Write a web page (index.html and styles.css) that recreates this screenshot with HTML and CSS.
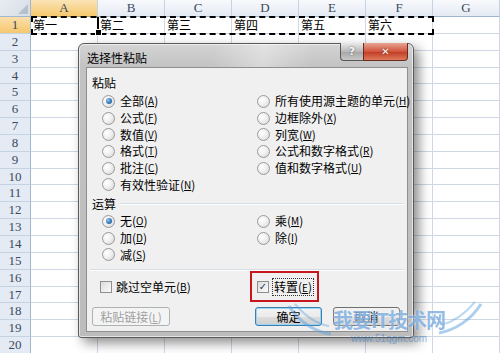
FILE: index.html
```html
<!DOCTYPE html>
<html lang="zh-CN">
<head>
    <meta charset="UTF-8">
    <title>选择性粘贴</title>
    <link rel="stylesheet" href="styles.css">
</head>
<body>
    <div class="screen">
        <div class="sheet">
            <div class="corner"></div>
            <div class="col-head sel">A</div>
            <div class="col-head">B</div>
            <div class="col-head">C</div>
            <div class="col-head">D</div>
            <div class="col-head">E</div>
            <div class="col-head">F</div>
            <div class="col-head">G</div>

            <div class="row-head sel">1</div>
            <div class="cell">第一</div><div class="cell">第二</div><div class="cell">第三</div><div class="cell">第四</div><div class="cell">第五</div><div class="cell">第六</div><div class="cell"></div>

            <div class="row-head">2</div><div class="blank"></div>
            <div class="row-head">3</div><div class="blank"></div>
            <div class="row-head">4</div><div class="blank"></div>
            <div class="row-head">5</div><div class="blank"></div>
            <div class="row-head">6</div><div class="blank"></div>
            <div class="row-head">7</div><div class="blank"></div>
            <div class="row-head">8</div><div class="blank"></div>
            <div class="row-head">9</div><div class="blank"></div>
            <div class="row-head">10</div><div class="blank"></div>
            <div class="row-head">11</div><div class="blank"></div>
            <div class="row-head">12</div><div class="blank"></div>
            <div class="row-head">13</div><div class="blank"></div>
            <div class="row-head">14</div><div class="blank"></div>
            <div class="row-head">15</div><div class="blank"></div>
            <div class="row-head">16</div><div class="blank"></div>
            <div class="row-head">17</div><div class="blank"></div>
            <div class="row-head">18</div><div class="blank"></div>
            <div class="row-head">19</div><div class="blank"></div>
            <div class="row-head">20</div><div class="blank"></div>
        </div>

        <!-- 复制区域的虚线框 -->
        <div class="marquee"></div>
        <div class="active-edge"></div>

        <div class="dialog">
            <div class="titlebar">
                <span class="title">选择性粘贴</span>
                <div class="caption-btns">
                    <span class="help-btn">?</span>
                    <span class="close-btn">&#x2715;</span>
                </div>
            </div>
            <div class="client">
                <div class="group-label">粘贴</div>
                <div class="options paste">
                    <label class="opt"><span class="radio on"></span>全部(<u>A</u>)</label>
                    <label class="opt"><span class="radio"></span>所有使用源主题的单元(<u>H</u>)</label>
                    <label class="opt"><span class="radio"></span>公式(<u>F</u>)</label>
                    <label class="opt"><span class="radio"></span>边框除外(<u>X</u>)</label>
                    <label class="opt"><span class="radio"></span>数值(<u>V</u>)</label>
                    <label class="opt"><span class="radio"></span>列宽(<u>W</u>)</label>
                    <label class="opt"><span class="radio"></span>格式(<u>T</u>)</label>
                    <label class="opt"><span class="radio"></span>公式和数字格式(<u>R</u>)</label>
                    <label class="opt"><span class="radio"></span>批注(<u>C</u>)</label>
                    <label class="opt"><span class="radio"></span>值和数字格式(<u>U</u>)</label>
                    <label class="opt"><span class="radio"></span>有效性验证(<u>N</u>)</label>
                </div>

                <div class="group-label line">运算</div>
                <div class="options ops">
                    <label class="opt"><span class="radio on"></span>无(<u>O</u>)</label>
                    <label class="opt"><span class="radio"></span>乘(<u>M</u>)</label>
                    <label class="opt"><span class="radio"></span>加(<u>D</u>)</label>
                    <label class="opt"><span class="radio"></span>除(<u>I</u>)</label>
                    <label class="opt"><span class="radio"></span>减(<u>S</u>)</label>
                </div>

                <div class="separator"></div>

                <div class="checks">
                    <label class="chk"><span class="box"></span>跳过空单元(<u>B</u>)</label>
                    <label class="chk marked"><span class="box on">&#x2713;</span><span class="focus">转置(<u>E</u>)</span></label>
                </div>

                <div class="buttons">
                    <button class="btn disabled">粘贴链接(<u>L</u>)</button>
                    <button class="btn default">确定</button>
                    <button class="btn">取消</button>
                </div>
            </div>
        </div>

        <div class="watermark">
            <svg class="wings" width="200" height="44" viewBox="0 0 200 44">
                <path d="M4 6 C 14 22, 30 32, 46 34" fill="none" stroke="#5aa0dc" stroke-width="3" opacity="0.5"/>
                <path d="M10 4 C 20 16, 32 24, 44 26" fill="none" stroke="#5aa0dc" stroke-width="2" opacity="0.4"/>
                <path d="M196 4 C 186 20, 170 30, 154 33" fill="none" stroke="#5aa0dc" stroke-width="3" opacity="0.5"/>
                <path d="M190 2 C 180 14, 168 22, 156 25" fill="none" stroke="#5aa0dc" stroke-width="2" opacity="0.4"/>
            </svg>
            <div class="wm-text">我要IT技术网</div>
            <div class="wm-url">www.51qgm.com</div>
        </div>
    </div>
</body>
</html>
```

FILE: styles.css
```css
body {
    margin: 0;
    background: #fff;
    font-family: "Noto Sans CJK SC", sans-serif;
}
.screen {
    position: relative;
    width: 500px;
    height: 353px;
    overflow: hidden;
    background: #fff;
}

/* 表格 */
.sheet {
    display: grid;
    grid-template-columns: 31px repeat(6, 67px) 67px;
    grid-template-rows: 17px repeat(20, 16.85px);
    height: 353px;
    background-color: #fff;
}
.corner {
    background: linear-gradient(135deg, #e9edf2 0%, #d6dde6 100%);
    border-right: 1px solid #9eb6ce;
    border-bottom: 1px solid #9eb6ce;
    position: relative;
}
.corner::after {
    content: "";
    position: absolute;
    right: 2px;
    bottom: 2px;
    border-left: 10px solid transparent;
    border-bottom: 10px solid #b4c0ce;
}
.col-head {
    background: linear-gradient(#f8f9fc, #e4eaf3);
    border-right: 1px solid #c5d2e2;
    border-bottom: 1px solid #9eb6ce;
    font-family: "Liberation Serif", serif;
    font-size: 13px;
    color: #3a4a5c;
    text-align: center;
    line-height: 16px;
}
.col-head.sel {
    background: linear-gradient(#fbe4b6, #f5c86e);
    border-bottom-color: #c29a4c;
}
.row-head {
    background: #e4ebf5;
    border-right: 1px solid #9eb6ce;
    border-bottom: 1px solid #c5d2e2;
    font-family: "Liberation Serif", serif;
    font-size: 13px;
    color: #3a4a5c;
    text-align: center;
    line-height: 16px;
}
.row-head.sel {
    background: linear-gradient(#fbe0ac, #f5c86e);
}
.cell {
    font-size: 12px;
    line-height: 16px;
    padding-left: 2px;
    color: #000;
    border-right: 1px solid #d0d7e5;
    border-bottom: 1px solid #d0d7e5;
}
.blank {
    grid-column: 2 / -1;
    border-bottom: 1px solid #d0d7e5;
    background: repeating-linear-gradient(to right, transparent 0, transparent 66px, #d0d7e5 66px, #d0d7e5 67px);
}

.marquee {
    position: absolute;
    left: 31px;
    top: 16px;
    width: 399px;
    height: 15px;
    border: 2px dashed #000;
}
.active-edge {
    position: absolute;
    left: 97px;
    top: 17px;
    width: 2px;
    height: 17px;
    background: #000;
}
.active-edge::after {
    content: "";
    position: absolute;
    left: -2px;
    bottom: -2px;
    width: 5px;
    height: 5px;
    background: #000;
    border: 1px solid #fff;
}

/* 对话框 */
.dialog {
    position: absolute;
    left: 78px;
    top: 43px;
    width: 334px;
    height: 293px;
    border: 1px solid #5a5a5a;
    border-radius: 6px 6px 3px 3px;
    background: linear-gradient(to bottom, #d4d4d4 0, #c2c2c2 24px, #bcbcbc 100%);
    box-shadow: 5px 5px 12px rgba(0, 0, 0, 0.45), inset 0 0 0 1px rgba(255, 255, 255, 0.6);
    display: flex;
    flex-direction: column;
}
.titlebar {
    height: 23px;
    display: flex;
    justify-content: space-between;
    align-items: flex-start;
    background: linear-gradient(100deg, rgba(255,255,255,0) 40%, rgba(255,255,255,0.35) 55%, rgba(255,255,255,0) 70%);
}
.title {
    font-size: 12px;
    color: #000;
    margin: 6px 0 0 8px;
    line-height: 16px;
}
.caption-btns {
    display: flex;
    margin-right: 5px;
    margin-top: -1px;
}
.help-btn, .close-btn {
    height: 17px;
    display: flex;
    align-items: center;
    justify-content: center;
    border: 1px solid #575757;
    border-top: none;
    font-family: "DejaVu Sans", sans-serif;
    font-weight: bold;
    color: #fff;
}
.help-btn {
    width: 22px;
    border-radius: 0 0 0 4px;
    background: linear-gradient(#eaeaea, #b8b8b8 50%, #a5a5a5 51%, #c8c8c8);
    font-size: 11px;
    color: #f6f6f6;
    text-shadow: 0 0 2px #555;
    border-right: none;
}
.close-btn {
    width: 43px;
    border-radius: 0 0 4px 0;
    border-color: #6a2a20;
    background: linear-gradient(#e9a493, #d0563e 50%, #c03a22 51%, #dd7a5a);
    font-size: 10px;
    text-shadow: 0 0 2px #6a1a10;
}
.client {
    flex: 1;
    margin: 0 5px 5px 7px;
    background: #f0f0f0;
    border: 1px solid #8f8f8f;
    position: relative;
    font-size: 12px;
    color: #000;
}
.group-label {
    height: 16px;
    line-height: 16px;
    margin: 7px 0 0 5px;
    display: flex;
    align-items: center;
    gap: 4px;
}
.group-label.line {
    margin-top: 3px;
}
.group-label.line::after {
    content: "";
    flex: 1;
    height: 1px;
    margin-right: 3px;
    background: #d5dfe5;
    border-bottom: 1px solid #fff;
}
.options {
    display: grid;
    grid-template-columns: 155px auto;
    grid-auto-rows: 16.7px;
    padding-left: 15px;
}
.options.paste {
    margin-top: 2px;
}
.options.ops {
    margin-top: 1px;
}
.opt {
    display: flex;
    align-items: center;
    white-space: nowrap;
    line-height: 16px;
}
u {
    font-size: 10px;
}
.radio {
    width: 11px;
    height: 11px;
    border-radius: 50%;
    border: 1px solid #9a9a9a;
    background: radial-gradient(circle at 35% 35%, #fff 0, #f0f0f0 45%, #d2d2d2 100%);
    margin-right: 5px;
    position: relative;
    flex: none;
}
.radio.on::after {
    content: "";
    position: absolute;
    left: 2.5px;
    top: 2.5px;
    width: 6px;
    height: 6px;
    border-radius: 50%;
    background: radial-gradient(circle at 35% 35%, #9cc8ee 0, #3a7fc2 50%, #1d4f86 100%);
}
.separator {
    margin: 6px 3px 0 3px;
    height: 1px;
    background: #d5dfe5;
    border-bottom: 1px solid #fff;
}
.checks {
    display: grid;
    grid-template-columns: 150px auto;
    height: 31px;
    padding-left: 13px;
    align-items: center;
}
.chk {
    display: flex;
    align-items: center;
    white-space: nowrap;
}
.box {
    width: 10px;
    height: 10px;
    border: 1px solid #8e8f8f;
    background: linear-gradient(135deg, #dcdcdc, #fbfbfb);
    margin-right: 4px;
    font-family: "DejaVu Sans", sans-serif;
    font-size: 10px;
    line-height: 10px;
    text-align: center;
    color: #1f3a5f;
    font-weight: bold;
}
.chk.marked {
    height: 27px;
    margin-left: 0;
    padding: 0 4px 0 5px;
    border: 2px solid #c8161e;
    justify-self: start;
}
.focus {
    outline: 1px dotted #333;
    outline-offset: 0;
    padding: 0 1px;
    line-height: 15px;
}
.buttons {
    display: grid;
    grid-template-columns: 163px 78px auto;
    padding-left: 5px;
    margin-top: 5px;
}
.btn {
    height: 19px;
    padding: 0;
    font-family: "Noto Sans CJK SC", sans-serif;
    font-size: 12px;
    line-height: 15px;
    color: #000;
    border: 1px solid #707070;
    border-radius: 3px;
    background: linear-gradient(#f2f2f2 0, #ebebeb 50%, #dddddd 51%, #cfcfcf 100%);
    width: 67px;
}
.btn.disabled {
    width: 78px;
    color: #a0a0a0;
    border-color: #adb2b5;
    background: #f4f4f4;
}
.btn.default {
    border-color: #3c7fb1;
    box-shadow: inset 0 0 0 1px #9bd3f5;
}

/* 水印 */
.watermark {
    position: absolute;
    left: 285px;
    top: 300px;
    width: 200px;
    height: 50px;
    pointer-events: none;
}
.wings {
    position: absolute;
    left: 0;
    top: 0;
}
.wm-text {
    position: absolute;
    left: 48px;
    top: 5px;
    font-size: 20px;
    font-weight: bold;
    color: rgba(40, 120, 200, 0.5);
    letter-spacing: -1px;
    text-shadow: 0 0 2px rgba(255, 255, 255, 0.9);
}
.wm-url {
    position: absolute;
    left: 66px;
    top: 33px;
    font-family: "Liberation Sans", sans-serif;
    font-size: 10px;
    color: rgba(40, 120, 200, 0.5);
}
```
